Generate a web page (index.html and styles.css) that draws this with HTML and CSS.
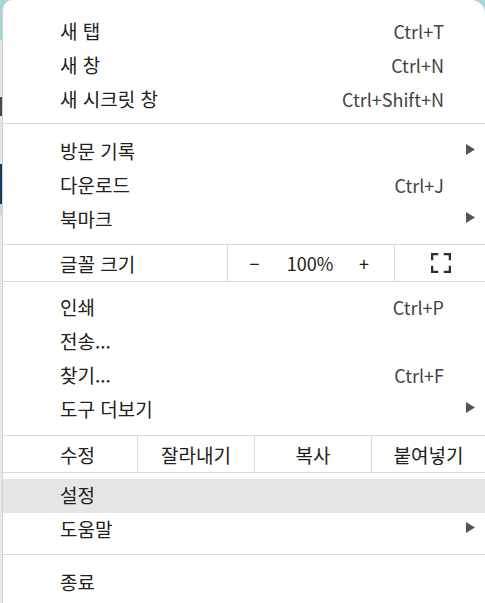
FILE: index.html
```html
<!DOCTYPE html>
<html lang="ko">
<head>
<meta charset="utf-8">
<title>메뉴</title>
<link rel="stylesheet" href="styles.css">
</head>
<body>
<div class="menu">
  <div class="item"><span class="label">새 탭</span><span class="shortcut">Ctrl+T</span><span class="arrow-cell"></span></div>
  <div class="item"><span class="label">새 창</span><span class="shortcut">Ctrl+N</span><span class="arrow-cell"></span></div>
  <div class="item"><span class="label">새 시크릿 창</span><span class="shortcut">Ctrl+Shift+N</span><span class="arrow-cell"></span></div>
  <div class="sep"></div>
  <div class="item"><span class="label">방문 기록</span><span class="shortcut"></span><span class="arrow-cell"><svg class="arrow" viewBox="0 0 9 11"><polygon points="0,0 9,5.5 0,11"/></svg></span></div>
  <div class="item"><span class="label">다운로드</span><span class="shortcut">Ctrl+J</span><span class="arrow-cell"></span></div>
  <div class="item"><span class="label">북마크</span><span class="shortcut"></span><span class="arrow-cell"><svg class="arrow" viewBox="0 0 9 11"><polygon points="0,0 9,5.5 0,11"/></svg></span></div>
  <div class="zoom-row">
    <span class="zoom-label">글꼴 크기</span>
    <div class="zoom-controls">
      <span class="zbtn">−</span>
      <span class="zval">100%</span>
      <span class="zbtn">+</span>
    </div>
    <div class="fullscreen">
      <svg class="fs-icon" viewBox="0 0 22 22"><path d="M1.2 8V1.2H8M14 1.2h6.8V8M20.8 14v6.8H14M8 20.8H1.2V14"/></svg>
    </div>
  </div>
  <div class="item first-after-zoom"><span class="label">인쇄</span><span class="shortcut">Ctrl+P</span><span class="arrow-cell"></span></div>
  <div class="item"><span class="label">전송...</span><span class="shortcut"></span><span class="arrow-cell"></span></div>
  <div class="item"><span class="label">찾기...</span><span class="shortcut">Ctrl+F</span><span class="arrow-cell"></span></div>
  <div class="item"><span class="label">도구 더보기</span><span class="shortcut"></span><span class="arrow-cell"><svg class="arrow" viewBox="0 0 9 11"><polygon points="0,0 9,5.5 0,11"/></svg></span></div>
  <div class="edit-row">
    <span class="edit-label">수정</span>
    <span class="edit-cell">잘라내기</span>
    <span class="edit-cell">복사</span>
    <span class="edit-cell">붙여넣기</span>
  </div>
  <div class="item active"><span class="label">설정</span><span class="shortcut"></span><span class="arrow-cell"></span></div>
  <div class="item"><span class="label">도움말</span><span class="shortcut"></span><span class="arrow-cell"><svg class="arrow" viewBox="0 0 9 11"><polygon points="0,0 9,5.5 0,11"/></svg></span></div>
  <div class="sep sep-end"></div>
  <div class="item"><span class="label">종료</span><span class="shortcut"></span><span class="arrow-cell"></span></div>
</div>
</body>
</html>
```

FILE: styles.css
```css
html, body {
  margin: 0;
  padding: 0;
}

body {
  width: 485px;
  height: 603px;
  overflow: hidden;
  font-family: "Noto Sans CJK KR", "Noto Sans", sans-serif;
  font-size: 19px;
  color: #202020;
  background: linear-gradient(to bottom,
    #a6d5d9 0, #a6d5d9 40px,
    #e4e4e4 40px, #e4e4e4 97px,
    #4a4a4a 97px, #4a4a4a 116px,
    #e4e4e4 116px, #e4e4e4 164px,
    #123d62 164px, #123d62 204px,
    #d4d4d4 204px, #d4d4d4 215px,
    #e8e8e8 215px);
}

.menu {
  margin-left: 2px;
  height: 603px;
  background: #fff;
  border-left: 1px solid #d2d2d2;
  border-top-left-radius: 10px;
  border-top-right-radius: 14px;
  padding-top: 15px;
  box-sizing: border-box;
}

.item {
  display: grid;
  grid-template-columns: 1fr auto 41px;
  align-items: center;
  height: 34px;
  padding-left: 57px;
  line-height: 1;
}

.label {
  margin-top: -3px;
}

.item.active {
  background: #e6e6e6;
}

.shortcut {
  color: #444;
  font-size: 18px;
  margin-top: -3px;
}

.arrow-cell {
  display: flex;
  align-items: center;
  padding-left: 22px;
}

.arrow {
  width: 9px;
  height: 11px;
  fill: #555;
  margin-top: -5px;
}

.sep {
  height: 1px;
  background: #dadada;
  margin: 6px 0 11px;
}

.sep.sep-end {
  margin: 7px 0 11px;
}

.zoom-row {
  display: grid;
  grid-template-columns: 224px 167px 1fr;
  height: 36px;
  margin-top: 7px;
  border-top: 1px solid #dadada;
  border-bottom: 1px solid #dadada;
  line-height: 1;
}

.zoom-label {
  display: flex;
  align-items: center;
  padding-left: 57px;
}

.zoom-controls {
  display: grid;
  grid-template-columns: 53px 58px 50px;
  align-items: center;
  border-left: 1px solid #dadada;
  text-align: center;
  font-size: 18px;
}

.fullscreen {
  display: flex;
  align-items: center;
  justify-content: center;
  border-left: 1px solid #dadada;
}

.fs-icon {
  width: 20px;
  height: 20px;
  fill: none;
  stroke: #2e2e2e;
  stroke-width: 2.6;
  margin-left: 2px;
}

.first-after-zoom {
  margin-top: 9px;
}

.edit-row {
  display: grid;
  grid-template-columns: 134px 117px 117px 1fr;
  height: 36px;
  margin-top: 8px;
  border-top: 1px solid #dadada;
  border-bottom: 1px solid #dadada;
  margin-bottom: 6px;
  line-height: 1;
}

.edit-label {
  display: flex;
  align-items: center;
  padding-left: 57px;
}

.edit-cell {
  display: flex;
  align-items: center;
  justify-content: center;
  border-left: 1px solid #dadada;
}
```
